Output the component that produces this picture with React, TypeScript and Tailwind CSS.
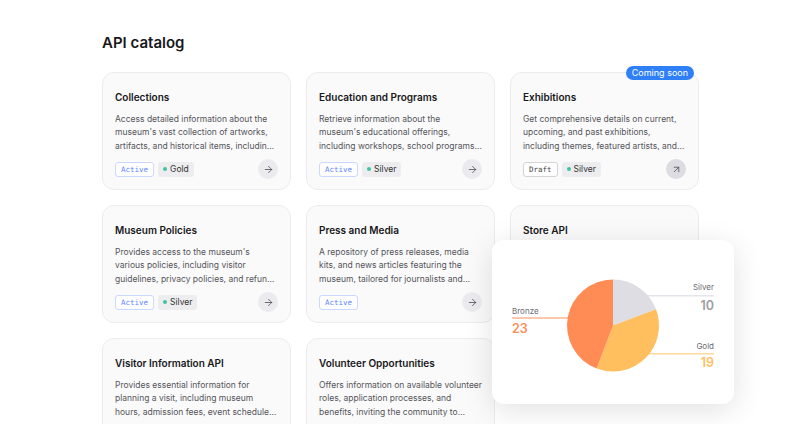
import React from 'react';
import { ArrowRight, ArrowUpRight } from 'lucide-react';

type Api = {
  title: string;
  desc: string;
  status?: 'Active' | 'Draft';
  tier?: 'Gold' | 'Silver';
  soon?: boolean;
  hovered?: boolean;
};

const apis: Api[] = [
  {
    title: 'Collections',
    desc: "Access detailed information about the museum's vast collection of artworks, artifacts, and historical items, including provenance and exhibition history.",
    status: 'Active',
    tier: 'Gold',
  },
  {
    title: 'Education and Programs',
    desc: "Retrieve information about the museum's educational offerings, including workshops, school programs, and lectures.",
    status: 'Active',
    tier: 'Silver',
  },
  {
    title: 'Exhibitions',
    desc: 'Get comprehensive details on current, upcoming, and past exhibitions, including themes, featured artists, and dates.',
    status: 'Draft',
    tier: 'Silver',
    soon: true,
    hovered: true,
  },
  {
    title: 'Museum Policies',
    desc: " Provides access to the museum's various policies, including visitor guidelines, privacy policies, and refund terms.",
    status: 'Active',
    tier: 'Silver',
  },
  {
    title: 'Press and Media',
    desc: 'A repository of press releases, media kits, and news articles featuring the museum, tailored for journalists and media outlets.',
    status: 'Active',
  },
  {
    title: 'Store API',
    desc: 'Browse products from the museum store, including prints, books and souvenirs.',
    status: 'Active',
    tier: 'Gold',
  },
  {
    title: 'Visitor Information API',
    desc: 'Provides essential information for planning a visit, including museum hours, admission fees, event schedules and more.',
    status: 'Active',
  },
  {
    title: 'Volunteer Opportunities',
    desc: 'Offers information on available volunteer roles, application processes, and benefits, inviting the community to actively take part.',
    status: 'Active',
  },
];

const ApiCard: React.FC<{ api: Api }> = ({ api }) => (
  <div className="relative h-[118px] rounded-[12px] border border-[#ececef] bg-[#fafafa] px-3 pt-4 pb-[10px] flex flex-col">
    {api.soon && (
      <span className="absolute -top-[7px] right-[4px] rounded-full bg-[#2f80f6] px-[6px] h-[14px] leading-[14px] text-[9px] text-white">
        Coming soon
      </span>
    )}
    <h3 className="text-[10px] leading-4 font-semibold text-[#18181b]">{api.title}</h3>
    <p className="mt-[8px] text-[8.5px] leading-[13.3px] text-[#55555b] line-clamp-3">{api.desc}</p>
    <div className="mt-auto flex items-center">
      {api.status && (
        <span
          className={
            api.status === 'Active'
              ? 'h-[15px] px-[5px] rounded-[3px] border border-[#cbd8ff] bg-white text-[#5e86ff] text-[7.5px] leading-[13px] font-["DejaVu_Sans_Mono",monospace]'
              : 'h-[15px] px-[5px] rounded-[3px] border border-[#d4d4d8] bg-white text-[#3f3f46] text-[7.5px] leading-[13px] font-["DejaVu_Sans_Mono",monospace]'
          }
        >
          {api.status}
        </span>
      )}
      {api.tier && (
        <span className="ml-[4px] h-[15px] px-[5px] rounded-[3px] bg-[#ededf0] text-[8.5px] leading-[15px] text-[#333] flex items-center gap-[3px]">
          <span className="w-[4px] h-[4px] rounded-full bg-[#3cc59f]"></span>
          {api.tier}
        </span>
      )}
      <span
        className={
          api.hovered
            ? 'ml-auto w-[20px] h-[20px] rounded-full bg-[#dcdce2] flex items-center justify-center text-[#3f3f46]'
            : 'ml-auto w-[20px] h-[20px] rounded-full bg-[#ebebef] flex items-center justify-center text-[#3f3f46]'
        }
      >
        {api.hovered ? <ArrowUpRight size={11} strokeWidth={1.6} /> : <ArrowRight size={11} strokeWidth={1.6} />}
      </span>
    </div>
  </div>
);

const TierChart: React.FC = () => (
  <div className="absolute left-[492px] top-[240px] w-[242px] h-[164px] rounded-[12px] bg-white shadow-[0_6px_30px_rgba(0,0,0,0.12)]">
    <svg width="242" height="164" viewBox="0 0 242 164" className="font-['Inter',sans-serif]">
      <line x1="150" y1="55.7" x2="222" y2="55.7" stroke="#e4e4ea" strokeWidth="1.5" />
      <line x1="150" y1="113.7" x2="222" y2="113.7" stroke="#ffd89c" strokeWidth="1.5" />
      <line x1="20" y1="78" x2="90" y2="78" stroke="#ffb590" strokeWidth="1.5" />
      <path d="M121 85.5 L121 39.5 A46 46 0 0 1 164.01 69.19 Z" fill="#dddde3" />
      <path d="M121 85.5 L164.01 69.19 A46 46 0 0 1 104.69 128.51 Z" fill="#ffbf5e" />
      <path d="M121 85.5 L104.69 128.51 A46 46 0 0 1 121 39.5 Z" fill="#ff8b55" />
      <text x="222" y="50" textAnchor="end" fontSize="8" fill="#6b6b72">Silver</text>
      <text x="222" y="70" textAnchor="end" fontSize="12.5" fontWeight="600" fill="#9d9da3">10</text>
      <text x="222" y="109" textAnchor="end" fontSize="8" fill="#6b6b72">Gold</text>
      <text x="222" y="127" textAnchor="end" fontSize="12.5" fontWeight="600" fill="#ffbf5e">19</text>
      <text x="20" y="74" fontSize="8" fill="#6b6b72">Bronze</text>
      <text x="20" y="92.5" fontSize="12.5" fontWeight="600" fill="#ff8b55">23</text>
    </svg>
  </div>
);

export default function App() {
  return (
    <div className="relative w-[800px] h-[424px] overflow-hidden bg-white font-['Inter',sans-serif]">
      <div className="pl-[102px] pt-[31px]">
        <h1 className="text-[15px] leading-6 font-semibold text-[#18181b]">API catalog</h1>
        <div className="mt-[17px] grid grid-cols-[189px_189px_189px] gap-[15px]">
          {apis.map((api) => (
            <ApiCard key={api.title} api={api} />
          ))}
        </div>
      </div>
      <TierChart />
    </div>
  );
}
